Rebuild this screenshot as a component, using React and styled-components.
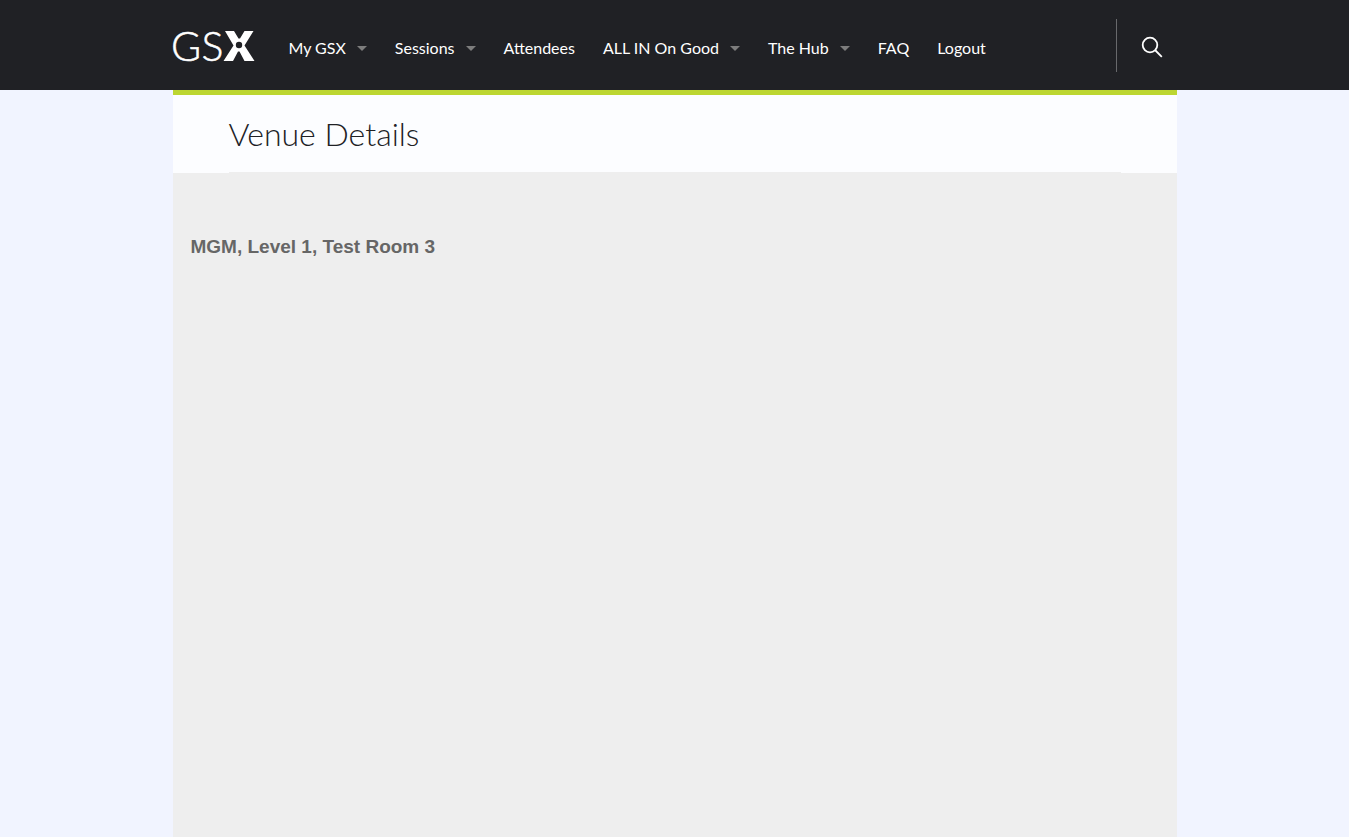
import React from "react";
import styled, { createGlobalStyle } from "styled-components";

const GlobalStyle = createGlobalStyle`
  *, *::before, *::after { box-sizing: border-box; }
  body {
    margin: 0;
    background: #f1f4ff;
    color: #202125;
    font-family: Lato, "Liberation Sans", sans-serif;
  }
`;

const Page = styled.div`
  min-height: 100vh;
  display: flex;
  flex-direction: column;
`;

const Header = styled.header`
  background: #202125;
`;

const HeaderInner = styled.div`
  display: flex;
  align-items: center;
  width: 100%;
  max-width: 1004px;
  height: 90px;
  margin: 0 auto;
`;

const LogoLink = styled.a`
  display: block;
  margin-right: 34px;
  svg { display: block; overflow: visible; }
`;

const LogoText = styled.text`
  font-family: Lato, sans-serif;
  font-size: 41px;
  font-weight: 300;
  fill: #fff;
  stroke: #fff;
  stroke-width: 0.5;
`;

const NavList = styled.ul`
  display: flex;
  align-items: center;
  gap: 28px;
  margin: 0;
  padding: 6px 0 0;
  list-style: none;
`;

const NavLink = styled.a`
  display: flex;
  align-items: center;
  gap: 11px;
  color: #fff;
  font-size: 16px;
  line-height: 20px;
  text-decoration: none;
  white-space: nowrap;
`;

const Caret = styled.span`
  border: 5px solid transparent;
  border-top-color: #7d7d7d;
  border-bottom: 0;
`;

const SearchArea = styled.div`
  display: flex;
  align-items: center;
  height: 53px;
  margin-left: auto;
  padding: 4px 14px 0 24px;
  border-left: 1px solid #68696c;
`;

const SearchButton = styled.button`
  width: 22px;
  height: 22px;
  padding: 0;
  border: 0;
  background: none;
  color: #fff;
  cursor: pointer;
  svg { display: block; }
`;

const Main = styled.main`
  flex: 1;
  display: flex;
  flex-direction: column;
  width: 100%;
  max-width: 1004px;
  margin: 0 auto;
  background: #eeeeee;
  border-top: 5px solid #bcd631;
`;

const TitleBar = styled.div`
  padding: 0 56px;
  background: #fcfdff;
`;

const Title = styled.h1`
  margin: 0;
  height: 78px;
  border-bottom: 1px solid #eeeeee;
  font-size: 32px;
  font-weight: 300;
  line-height: 78px;
`;

const Content = styled.section`
  padding: 60px 18px;
`;

const VenueName = styled.h2`
  margin: 0;
  color: #666;
  font-family: "Liberation Sans", Arial, sans-serif;
  font-size: 19px;
  font-weight: 700;
  line-height: 28px;
`;

const items = [
  { label: "My GSX", menu: true },
  { label: "Sessions", menu: true },
  { label: "Attendees" },
  { label: "ALL IN On Good", menu: true },
  { label: "The Hub", menu: true },
  { label: "FAQ" },
  { label: "Logout" },
];

function Logo() {
  return (
    <svg width="82" height="60" viewBox="0 0 82 60" aria-hidden="true">
      <LogoText x="-2" y="45.5">G</LogoText>
      <LogoText x="28.5" y="45.5">S</LogoText>
      <path
        d="M52 16h9l4.500 7.500h1.500l4.500-7.500h9L71.500 30.500 81.500 46H71.500l-5-9.500h-1.500L60 46H50.500L60.500 30.500z"
        fill="#fff"
      />
      <circle cx="66" cy="30" r="3.200" fill="#202125" />
    </svg>
  );
}

export default function App() {
  return (
    <Page>
      <GlobalStyle />
      <Header>
        <HeaderInner>
          <LogoLink href="#" aria-label="GSX home"><Logo /></LogoLink>
          <nav>
            <NavList>
              {items.map(({ label, menu }) => (
                <li key={label}>
                  <NavLink href="#">{label}{menu && <Caret />}</NavLink>
                </li>
              ))}
            </NavList>
          </nav>
          <SearchArea>
            <SearchButton type="button" aria-label="Search">
              <svg width="22" height="22" viewBox="0 0 22 22" fill="none" stroke="currentColor" strokeWidth="1.8">
                <circle cx="9" cy="9" r="7.300" />
                <path d="m14 14 6.800 6.800" />
              </svg>
            </SearchButton>
          </SearchArea>
        </HeaderInner>
      </Header>
      <Main>
        <TitleBar><Title>Venue Details</Title></TitleBar>
        <Content><VenueName>MGM, Level 1, Test Room 3</VenueName></Content>
      </Main>
    </Page>
  );
}
